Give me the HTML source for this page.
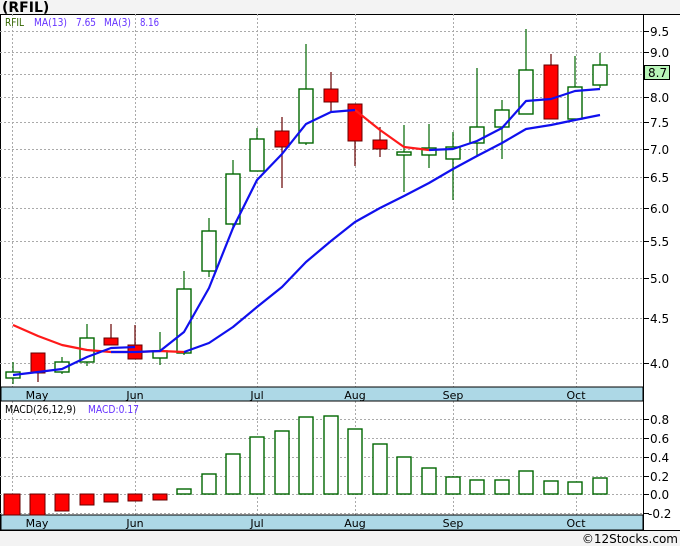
<!DOCTYPE html>
<html><head><meta charset="utf-8"><style>
html,body{margin:0;padding:0;background:#f3f3f3;width:680px;height:546px;overflow:hidden}
svg{display:block;font-family:"DejaVu Sans","Liberation Sans",sans-serif}
</style></head><body>
<svg width="680" height="546" viewBox="0 0 680 546" xmlns="http://www.w3.org/2000/svg">
<rect x="0" y="0" width="680" height="546" fill="#f3f3f3"/>
<text x="2" y="12" font-size="14" font-weight="bold" fill="#000">(RFIL)</text>
<rect x="0" y="14" width="680" height="516" fill="#fff"/>
<line x1="0" y1="14.5" x2="680" y2="14.5" stroke="#000"/>
<line x1="0" y1="530.5" x2="680" y2="530.5" stroke="#000"/>
<line x1="0.5" y1="14" x2="0.5" y2="530" stroke="#000"/>
<line x1="643.5" y1="14" x2="643.5" y2="530" stroke="#000"/>
<g stroke="#aaa" stroke-dasharray="2,2" stroke-width="1">
<line x1="0" y1="31.5" x2="643" y2="31.5"/><line x1="0" y1="52.5" x2="643" y2="52.5"/>
<line x1="0" y1="74.5" x2="643" y2="74.5"/><line x1="0" y1="97.5" x2="643" y2="97.5"/>
<line x1="0" y1="122.5" x2="643" y2="122.5"/><line x1="0" y1="149.5" x2="643" y2="149.5"/>
<line x1="0" y1="177.5" x2="643" y2="177.5"/><line x1="0" y1="208.5" x2="643" y2="208.5"/>
<line x1="0" y1="241.5" x2="643" y2="241.5"/><line x1="0" y1="278.5" x2="643" y2="278.5"/>
<line x1="0" y1="318.5" x2="643" y2="318.5"/><line x1="0" y1="363.5" x2="643" y2="363.5"/>
<line x1="12.5" y1="14" x2="12.5" y2="387"/><line x1="135.5" y1="14" x2="135.5" y2="387"/>
<line x1="257.5" y1="14" x2="257.5" y2="387"/><line x1="355.5" y1="14" x2="355.5" y2="387"/>
<line x1="453.5" y1="14" x2="453.5" y2="387"/><line x1="576.5" y1="14" x2="576.5" y2="387"/>
<line x1="0" y1="419.5" x2="643" y2="419.5"/><line x1="0" y1="438.5" x2="643" y2="438.5"/>
<line x1="0" y1="457.5" x2="643" y2="457.5"/><line x1="0" y1="476.5" x2="643" y2="476.5"/>
<line x1="0" y1="494.5" x2="643" y2="494.5"/><line x1="0" y1="513.5" x2="643" y2="513.5"/>
<line x1="12.5" y1="401" x2="12.5" y2="515"/><line x1="135.5" y1="401" x2="135.5" y2="515"/>
<line x1="257.5" y1="401" x2="257.5" y2="515"/><line x1="355.5" y1="401" x2="355.5" y2="515"/>
<line x1="453.5" y1="401" x2="453.5" y2="515"/><line x1="576.5" y1="401" x2="576.5" y2="515"/>
</g>
<g stroke="#000">
<line x1="643" y1="31.5" x2="649" y2="31.5"/><line x1="643" y1="52.5" x2="649" y2="52.5"/>
<line x1="643" y1="97.5" x2="649" y2="97.5"/><line x1="643" y1="122.5" x2="649" y2="122.5"/>
<line x1="643" y1="149.5" x2="649" y2="149.5"/><line x1="643" y1="177.5" x2="649" y2="177.5"/>
<line x1="643" y1="208.5" x2="649" y2="208.5"/><line x1="643" y1="241.5" x2="649" y2="241.5"/>
<line x1="643" y1="278.5" x2="649" y2="278.5"/><line x1="643" y1="318.5" x2="649" y2="318.5"/>
<line x1="643" y1="363.5" x2="649" y2="363.5"/>
<line x1="643" y1="419.5" x2="649" y2="419.5"/><line x1="643" y1="438.5" x2="649" y2="438.5"/>
<line x1="643" y1="457.5" x2="649" y2="457.5"/><line x1="643" y1="476.5" x2="649" y2="476.5"/>
<line x1="643" y1="494.5" x2="649" y2="494.5"/><line x1="643" y1="513.5" x2="649" y2="513.5"/>
</g>
<g font-size="12" fill="#000">
<text x="650" y="36">9.5</text><text x="650" y="57">9.0</text><text x="650" y="102">8.0</text>
<text x="650" y="127">7.5</text><text x="650" y="154">7.0</text><text x="650" y="182">6.5</text>
<text x="650" y="213">6.0</text><text x="650" y="246">5.5</text><text x="650" y="283">5.0</text>
<text x="650" y="323">4.5</text><text x="650" y="368">4.0</text>
<text x="650" y="424">0.8</text><text x="650" y="443">0.6</text><text x="650" y="462">0.4</text>
<text x="650" y="481">0.2</text><text x="650" y="499">0.0</text><text x="648" y="518">-0.2</text>
</g>
<rect x="644.5" y="65.5" width="25" height="14" fill="#b8f5b8" stroke="#000"/>
<text x="648" y="77" font-size="12">8.7</text>
<g font-size="11">
<text x="5" y="26" fill="#336600" textLength="19" lengthAdjust="spacingAndGlyphs">RFIL</text>
<text x="34" y="26" fill="#6633ff" textLength="33" lengthAdjust="spacingAndGlyphs">MA(13)</text>
<text x="76" y="26" fill="#6633ff" textLength="20" lengthAdjust="spacingAndGlyphs">7.65</text>
<text x="104" y="26" fill="#6633ff" textLength="27" lengthAdjust="spacingAndGlyphs">MA(3)</text>
<text x="140" y="26" fill="#6633ff" textLength="19" lengthAdjust="spacingAndGlyphs">8.16</text>
<text x="5" y="413" fill="#000" textLength="71" lengthAdjust="spacingAndGlyphs">MACD(26,12,9)</text>
<text x="88" y="413" fill="#6633ff" textLength="51" lengthAdjust="spacingAndGlyphs">MACD:0.17</text>
</g>
<rect x="1" y="387" width="642" height="14" fill="#add8e6" stroke="#000"/>
<rect x="1" y="515" width="642" height="15" fill="#add8e6" stroke="#000"/>
<g font-size="11" fill="#000" text-anchor="middle">
<text x="37" y="399">May</text><text x="135" y="399">Jun</text><text x="257" y="399">Jul</text>
<text x="355" y="399">Aug</text><text x="453" y="399">Sep</text><text x="576" y="399">Oct</text>
<text x="37" y="527">May</text><text x="135" y="527">Jun</text><text x="257" y="527">Jul</text>
<text x="355" y="527">Aug</text><text x="453" y="527">Sep</text><text x="576" y="527">Oct</text>
</g>
<g stroke-width="1.2">
<g stroke="#006600">
<line x1="13" y1="362" x2="13" y2="384"/><line x1="62" y1="357" x2="62" y2="374"/>
<line x1="87" y1="324" x2="87" y2="366"/><line x1="160" y1="332" x2="160" y2="365"/>
<line x1="184" y1="271" x2="184" y2="355"/><line x1="209" y1="218" x2="209" y2="277"/>
<line x1="233" y1="160" x2="233" y2="228"/><line x1="257" y1="128" x2="257" y2="171"/>
<line x1="306" y1="44" x2="306" y2="145"/><line x1="404" y1="125" x2="404" y2="192"/>
<line x1="429" y1="124" x2="429" y2="168"/><line x1="453" y1="132" x2="453" y2="200"/>
<line x1="477" y1="68" x2="477" y2="157"/><line x1="502" y1="100" x2="502" y2="159"/>
<line x1="526" y1="29" x2="526" y2="114"/><line x1="575" y1="56" x2="575" y2="121"/>
<line x1="600" y1="53" x2="600" y2="88"/>
</g>
<g stroke="#660000">
<line x1="38" y1="353" x2="38" y2="382"/><line x1="111" y1="324" x2="111" y2="345"/>
<line x1="135" y1="325" x2="135" y2="359"/><line x1="282" y1="117" x2="282" y2="188"/>
<line x1="331" y1="72" x2="331" y2="112"/><line x1="355" y1="104" x2="355" y2="166"/>
<line x1="380" y1="127" x2="380" y2="157"/><line x1="551" y1="54" x2="551" y2="119"/>
</g>
</g>
<g fill="#fff" stroke="#006600" stroke-width="1.4">
<rect x="6" y="372" width="14" height="6"/><rect x="55" y="362" width="14" height="10"/>
<rect x="80" y="338" width="14" height="24"/><rect x="153" y="351" width="14" height="7"/>
<rect x="177" y="289" width="14" height="64"/><rect x="202" y="231" width="14" height="40"/>
<rect x="226" y="174" width="14" height="50"/><rect x="250" y="139" width="14" height="32"/>
<rect x="299" y="89" width="14" height="54"/><rect x="397" y="152" width="14" height="3"/>
<rect x="422" y="148" width="14" height="7"/><rect x="446" y="147" width="14" height="12"/>
<rect x="470" y="127" width="14" height="16"/><rect x="495" y="110" width="14" height="17"/>
<rect x="519" y="70" width="14" height="44"/><rect x="568" y="87" width="14" height="32"/>
<rect x="593" y="65" width="14" height="20"/>
</g>
<g fill="#ff0000" stroke="#660000" stroke-width="1">
<rect x="31" y="353" width="14" height="20"/><rect x="104" y="338" width="14" height="7"/>
<rect x="128" y="345" width="14" height="14"/><rect x="275" y="131" width="14" height="16"/>
<rect x="324" y="89" width="14" height="13"/><rect x="348" y="104" width="14" height="37"/>
<rect x="373" y="140" width="14" height="9"/><rect x="544" y="65" width="14" height="54"/>
</g>
<g fill="none" stroke-width="2.2" stroke-linejoin="round">
<polyline stroke="#ff1a1a" points="13,325 38,336 62,345 87,350 111,352 135,352 160,351 184,352"/>
<polyline stroke="#ff1a1a" points="355,110 380,130 404,147 429,150"/>
<polyline stroke="#1010ee" points="13,375 38,372 62,369 87,357 111,348 135,347"/>
<polyline stroke="#1010ee" points="111,352 135,352 160,351 184,332 209,288 233,228 257,180 282,154 306,124 331,112 355,110"/>
<polyline stroke="#1010ee" points="429,150 453,149 477,141 502,128 526,101 551,99 575,91 600,89"/>
<polyline stroke="#1010ee" points="184,352 209,343 233,327 257,307 282,287 306,262 331,241 355,222 380,208 404,196 429,183 453,169 477,156 502,143 526,129 551,125 575,120 600,115"/>
</g>
<g fill="#ff0000" stroke="#660000" stroke-width="1">
<rect x="4" y="494" width="16" height="21"/><rect x="30" y="494" width="15" height="21"/>
<rect x="55" y="494" width="14" height="17"/><rect x="80" y="494" width="14" height="11"/>
<rect x="104" y="494" width="14" height="8"/><rect x="128" y="494" width="14" height="7"/>
<rect x="153" y="494" width="14" height="6"/>
</g>
<g fill="#fff" stroke="#006600" stroke-width="1.4">
<rect x="177" y="489" width="14" height="5"/><rect x="202" y="474" width="14" height="20"/>
<rect x="226" y="454" width="14" height="40"/><rect x="250" y="437" width="14" height="57"/>
<rect x="275" y="431" width="14" height="63"/><rect x="299" y="417" width="14" height="77"/>
<rect x="324" y="416" width="14" height="78"/><rect x="348" y="429" width="14" height="65"/>
<rect x="373" y="444" width="14" height="50"/><rect x="397" y="457" width="14" height="37"/>
<rect x="422" y="468" width="14" height="26"/><rect x="446" y="477" width="14" height="17"/>
<rect x="470" y="480" width="14" height="14"/><rect x="495" y="480" width="14" height="14"/>
<rect x="519" y="471" width="14" height="23"/><rect x="544" y="481" width="14" height="13"/>
<rect x="568" y="482" width="14" height="12"/><rect x="593" y="478" width="14" height="16"/>
</g>
<text x="678" y="543" font-size="12" fill="#000" text-anchor="end">©12Stocks.com</text>
</svg>
</body></html>
